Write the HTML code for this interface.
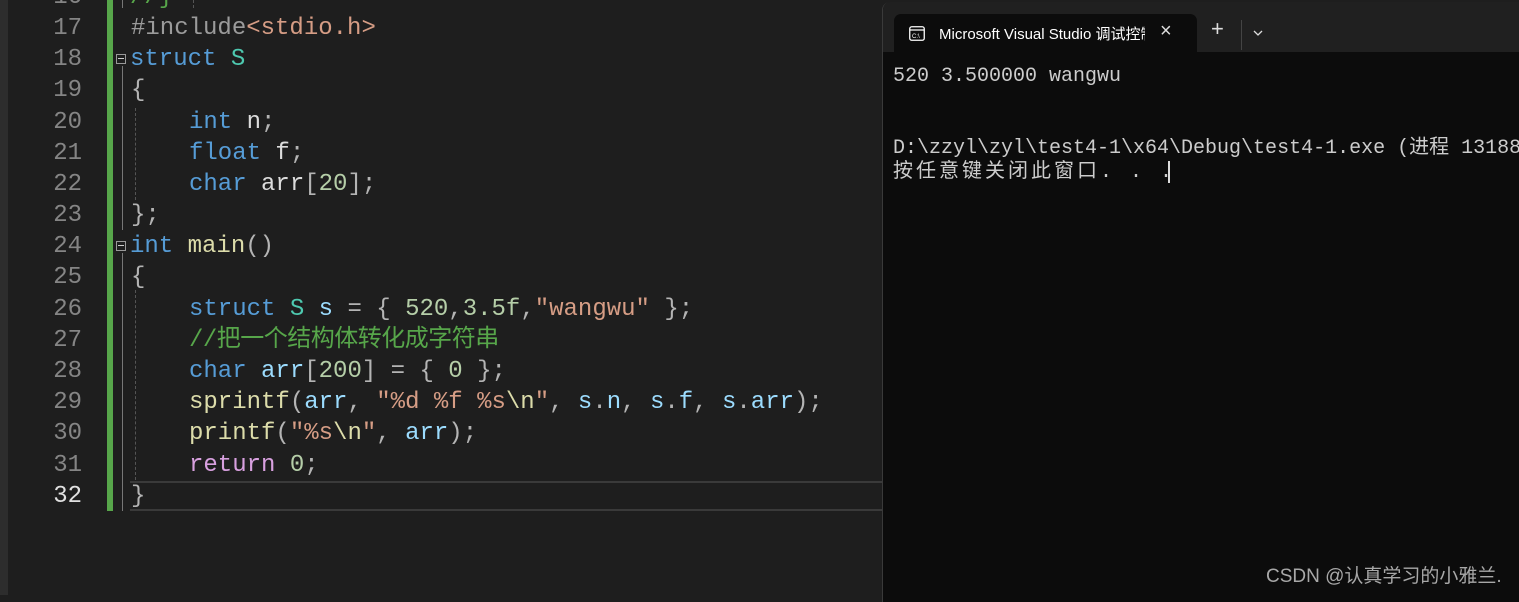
<!DOCTYPE html>
<html><head><meta charset="utf-8"><style>
*{margin:0;padding:0;box-sizing:border-box}
body{width:1519px;height:595px;background:#1e1e1e;overflow:hidden;position:relative;font-family:"Liberation Mono","Noto Sans CJK SC",monospace}
.strip{position:absolute;left:0;top:0;width:8px;height:595px;background:#2d2d2d}
.ln{position:absolute;left:20px;width:62px;text-align:right;font-size:24px;color:#858585;line-height:31px;margin-top:2px}
.cd{position:absolute;left:130px;font-size:24px;line-height:31px;color:#dcdcdc;white-space:pre;margin-top:2px}
.kw{color:#569cd6}.ty{color:#4ec9b0}.nu{color:#b5cea8}.st{color:#d69d85}.fn{color:#dcdcaa}.va{color:#9cdcfe}.cm{color:#57a64a}.rt{color:#d8a0df}.pu{color:#b4b4b4}.pp{color:#9b9b9b}
.bar{position:absolute;left:107px;top:0;width:6px;height:511px;background:#57a64a}
.fold{position:absolute;left:116px;width:10px;height:10px;border:1px solid #999;}
.fold:after{content:"";position:absolute;left:1px;top:3px;width:6px;height:1px;background:#ccc}
.vl{position:absolute;width:1px;background:#777}
.dash{position:absolute;width:0;border-left:1px dashed #555}
.term{position:absolute;left:882px;top:2px;width:640px;height:600px;background:#0c0c0c;border-left:1px solid #3a3a3a;border-top-left-radius:8px;overflow:hidden}
.tabbar{position:absolute;left:0;top:0;width:100%;height:50px;background:#202020}
.tab{position:absolute;left:11px;top:12px;width:303px;height:38px;background:#0c0c0c;border-radius:7px 7px 0 0;color:#fff;font-family:"Liberation Sans","Noto Sans CJK SC",sans-serif;font-size:15px}
.tt{position:absolute;left:882px;font-size:20px;line-height:24px;color:#cccccc;white-space:pre}
</style></head><body>
<div class="strip"></div>
<div class="bar"></div>
<div class="ln" style="top:-20px">16</div>
<div class="ln" style="top:11px">17</div>
<div class="ln" style="top:42px">18</div>
<div class="ln" style="top:73px">19</div>
<div class="ln" style="top:105px">20</div>
<div class="ln" style="top:136px">21</div>
<div class="ln" style="top:167px">22</div>
<div class="ln" style="top:198px">23</div>
<div class="ln" style="top:229px">24</div>
<div class="ln" style="top:260px">25</div>
<div class="ln" style="top:292px">26</div>
<div class="ln" style="top:323px">27</div>
<div class="ln" style="top:354px">28</div>
<div class="ln" style="top:385px">29</div>
<div class="ln" style="top:416px">30</div>
<div class="ln" style="top:448px">31</div>
<div class="ln" style="top:479px;color:#e0e0e0">32</div>

<div style="position:absolute;left:130px;top:481px;width:752px;height:30px;border-top:2px solid #3a3a3a;border-bottom:2px solid #3a3a3a"></div>

<div class="fold" style="top:54px"></div>
<div class="fold" style="top:241px"></div>
<div class="vl" style="left:122px;top:0;height:8px"></div>
<div class="vl" style="left:122px;top:66px;height:164px"></div>
<div class="vl" style="left:122px;top:253px;height:258px"></div>
<div class="dash" style="left:135px;top:108px;height:92px"></div>
<div class="dash" style="left:135px;top:290px;height:190px"></div>
<div class="dash" style="left:193px;top:0;height:8px"></div>

<div class="cd" style="top:-20px;left:130px"><span class="cm">//}</span></div>
<div class="cd" style="top:11px;left:131px"><span class="pp">#include</span><span class="st">&lt;stdio.h&gt;</span></div>
<div class="cd" style="top:42px"><span class="kw">struct</span> <span class="ty">S</span></div>
<div class="cd" style="top:73px;left:131px"><span class="pu">{</span></div>
<div class="cd" style="top:105px;left:189px"><span class="kw">int</span> <span class="va" style="color:#dcdcdc">n</span><span class="pu">;</span></div>
<div class="cd" style="top:136px;left:189px"><span class="kw">float</span> f<span class="pu">;</span></div>
<div class="cd" style="top:167px;left:189px"><span class="kw">char</span> arr<span class="pu">[</span><span class="nu">20</span><span class="pu">];</span></div>
<div class="cd" style="top:198px;left:131px"><span class="pu">};</span></div>
<div class="cd" style="top:229px"><span class="kw">int</span> <span class="fn">main</span><span class="pu">()</span></div>
<div class="cd" style="top:260px;left:131px"><span class="pu">{</span></div>
<div class="cd" style="top:292px;left:189px"><span class="kw">struct</span> <span class="ty">S</span> <span class="va">s</span> <span class="pu">=</span> <span class="pu">{</span> <span class="nu">520</span><span class="pu">,</span><span class="nu">3.5f</span><span class="pu">,</span><span class="st">"wangwu"</span> <span class="pu">};</span></div>
<div class="cd" style="top:323px;left:189px;letter-spacing:-0.5px"><span class="cm">//把一个结构体转化成字符串</span></div>
<div class="cd" style="top:354px;left:189px"><span class="kw">char</span> <span class="va">arr</span><span class="pu">[</span><span class="nu">200</span><span class="pu">]</span> <span class="pu">=</span> <span class="pu">{</span> <span class="nu">0</span> <span class="pu">};</span></div>
<div class="cd" style="top:385px;left:189px"><span class="fn">sprintf</span><span class="pu">(</span><span class="va">arr</span><span class="pu">,</span> <span class="st">"%d %f %s</span><span class="fn">\n</span><span class="st">"</span><span class="pu">,</span> <span class="va">s</span><span class="pu">.</span><span class="va">n</span><span class="pu">,</span> <span class="va">s</span><span class="pu">.</span><span class="va">f</span><span class="pu">,</span> <span class="va">s</span><span class="pu">.</span><span class="va">arr</span><span class="pu">);</span></div>
<div class="cd" style="top:416px;left:189px"><span class="fn">printf</span><span class="pu">(</span><span class="st">"%s</span><span class="fn">\n</span><span class="st">"</span><span class="pu">,</span> <span class="va">arr</span><span class="pu">);</span></div>
<div class="cd" style="top:448px;left:189px"><span class="rt">return</span> <span class="nu">0</span><span class="pu">;</span></div>
<div class="cd" style="top:479px;left:131px"><span class="pu">}</span></div>

<div class="term">
  <div class="tabbar"></div>
  <div class="tab">
    <svg style="position:absolute;left:15px;top:12px" width="16" height="15" viewBox="0 0 16 15"><rect x="0.75" y="0.75" width="14.5" height="13.5" rx="2" fill="none" stroke="#fff" stroke-width="1.3"/><line x1="1" y1="4" x2="15" y2="4" stroke="#fff" stroke-width="1.2"/><text x="3" y="12" font-size="6" fill="#fff" font-family="Liberation Sans">C:\</text></svg>
    <span style="position:absolute;left:45px;top:9px;white-space:nowrap;width:206px;overflow:hidden;display:block">Microsoft Visual Studio 调试控制台</span>
    <span style="position:absolute;left:266px;top:6px;font-size:20px;color:#ddd">×</span>
  </div>
  <span style="position:absolute;left:328px;top:14px;color:#ddd;font-size:22px;font-family:'Liberation Sans',sans-serif">+</span>
  <div style="position:absolute;left:358px;top:18px;width:1px;height:30px;background:#444"></div>
  <svg style="position:absolute;left:370px;top:28px" width="10" height="6" viewBox="0 0 10 6"><path d="M1 1L5 5L9 1" fill="none" stroke="#ddd" stroke-width="1.3"/></svg>
</div>
<div class="tt" style="top:65px;left:893px">520 3.500000 wangwu</div>
<div class="tt" style="top:137px;left:893px">D:\zzyl\zyl\test4-1\x64\Debug\test4-1.exe (进程 13188</div>
<div class="tt" style="top:161px;left:893px;letter-spacing:3px">按任意键关闭此窗口. . .</div>
<div style="position:absolute;left:1168px;top:161px;width:2px;height:22px;background:#ddd"></div>
<div style="position:absolute;left:1266px;top:561px;font-family:'Liberation Sans','Noto Sans CJK SC',sans-serif;font-size:19px;color:#a8a8a8;white-space:nowrap">CSDN @认真学习的小雅兰.</div>
</body></html>
